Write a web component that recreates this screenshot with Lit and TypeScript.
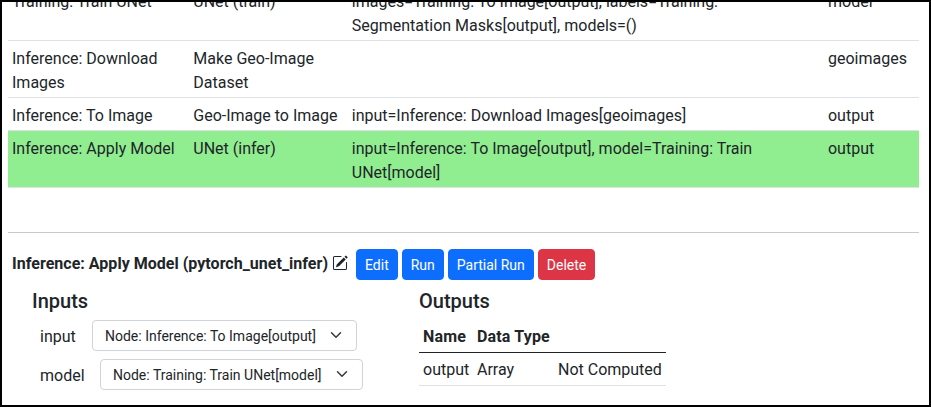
import { LitElement, html, css, svg } from "lit";
import { customElement } from "lit/decorators.js";

interface PipelineNode {
  name: string;
  type: string;
  inputs: string;
  output: string;
  selected?: boolean;
}

const NODES: PipelineNode[] = [
  {
    name: "Training: Train UNet",
    type: "UNet (train)",
    inputs: "images=Training: To Image[output], labels=Training: Segmentation Masks[output], models=()",
    output: "model",
  },
  { name: "Inference: Download Images", type: "Make Geo-Image Dataset", inputs: "", output: "geoimages" },
  {
    name: "Inference: To Image",
    type: "Geo-Image to Image",
    inputs: "input=Inference: Download Images[geoimages]",
    output: "output",
  },
  {
    name: "Inference: Apply Model",
    type: "UNet (infer)",
    inputs: "input=Inference: To Image[output], model=Training: Train UNet[model]",
    output: "output",
    selected: true,
  },
];

const pencilSquare = svg`
  <path d="M15.502 1.94a.5.5 0 0 1 0 .706L14.459 3.69l-2-2L13.502.646a.5.5 0 0 1 .707 0l1.293 1.293zm-1.75 2.456-2-2L4.939 9.21a.5.5 0 0 0-.121.196l-.805 2.414a.25.25 0 0 0 .316.316l2.414-.805a.5.5 0 0 0 .196-.12l6.813-6.814z"/>
  <path fill-rule="evenodd" d="M1 13.5A1.5 1.5 0 0 0 2.5 15h11a1.5 1.5 0 0 0 1.5-1.5v-6a.5.5 0 0 0-1 0v6a.5.5 0 0 1-.5.5h-11a.5.5 0 0 1-.5-.5v-11a.5.5 0 0 1 .5-.5H9a.5.5 0 0 0 0-1H2.5A1.5 1.5 0 0 0 1 2.5v11z"/>`;

@customElement("app-root")
export class AppRoot extends LitElement {
  static styles = css`
    :host {
      display: block;
      box-sizing: border-box;
      height: 407px;
      overflow: hidden;
      border: 2px solid #000;
      background: #fff;
      color: #212529;
      font: 400 16px/24px Roboto, "Liberation Sans", sans-serif;
    }
    * { box-sizing: border-box; }
    .page { padding: 0 10px 0 6px; }
    .nodes { margin-top: -18px; }
    .node {
      display: grid;
      grid-template-columns: 181.3px 158.5px 476.2px 1fr;
      border-bottom: 1px solid #dee2e6;
    }
    .node.selected { background: #90ee90; }
    .cell { padding: 6px 4px 2px; }
    .cell.inputs { padding-right: 50px; }
    .rule { height: 1px; margin: 44px 0 16px; background: #c8c9ca; }
    .bar { display: flex; align-items: center; gap: 4px; height: 31px; padding-left: 4px; }
    .title { width: 316px; padding-bottom: 2px; font-weight: 700; letter-spacing: 0.02px; white-space: nowrap; }
    .edit-icon { width: 16px; height: 16px; margin: 0 4px 3px 0; fill: #212529; flex: none; }
    button {
      height: 31px;
      padding: 5px 8px 3px;
      border: 1px solid #0d6efd;
      border-radius: 4px;
      background: #0d6efd;
      color: #fff;
      font: 400 14px/21px Roboto, "Liberation Sans", sans-serif;
      white-space: nowrap;
    }
    button.danger { background: #dc3545; border-color: #dc3545; }
    .panels { display: grid; grid-template-columns: 387px 1fr; padding: 9px 0 0 24px; }
    h5 { margin: 0 0 7px; font-size: 20px; line-height: 24px; font-weight: 500; }
    .field { display: flex; align-items: center; height: 31px; margin: 0 0 8px 8px; }
    .label { padding-top: 2px; }
    .label.input { width: 52px; }
    .label.model { width: 60px; }
    .select {
      display: flex;
      align-items: center;
      justify-content: space-between;
      height: 31px;
      padding: 1px 12px 0;
      border: 1px solid #ced4da;
      border-radius: 4px;
      font-size: 14px;
      line-height: 21px;
      white-space: nowrap;
    }
    .select.input { width: 265px; }
    .select.model { width: 263px; }
    .chevron { width: 16px; height: 12px; margin-bottom: 2px; }
    table { border-collapse: separate; border-spacing: 0; width: 247px; table-layout: fixed; }
    th, td { padding: 5px 4px 3px; height: 33px; text-align: left; white-space: nowrap; border-bottom: 1px solid #dee2e6; }
    th { font-weight: 700; letter-spacing: 0.15px; border-bottom-color: #212529; }
    .col-name { width: 54px; }
    .col-type { width: 81px; }
  `;

  private select(kind: string, label: string) {
    return html`<div class="field">
      <span class="label ${kind}">${kind}</span>
      <div class="select ${kind}">
        <span>${label}</span>
        <svg class="chevron" viewBox="0 0 16 16">
          <path fill="none" stroke="#343a40" stroke-linecap="round" stroke-linejoin="round" stroke-width="2" d="M2 5l6 6 6-6" />
        </svg>
      </div>
    </div>`;
  }

  render() {
    return html`<div class="page">
      <div class="nodes">
        ${NODES.map(
          (n) => html`<div class="node ${n.selected ? "selected" : ""}">
            <div class="cell">${n.name}</div>
            <div class="cell">${n.type}</div>
            <div class="cell inputs">${n.inputs}</div>
            <div class="cell">${n.output}</div>
          </div>`,
        )}
      </div>
      <div class="rule"></div>
      <div class="bar">
        <span class="title">Inference: Apply Model (pytorch_unet_infer)</span>
        <svg class="edit-icon" viewBox="0 0 16 16">${pencilSquare}</svg>
        <button>Edit</button>
        <button>Run</button>
        <button>Partial Run</button>
        <button class="danger">Delete</button>
      </div>
      <div class="panels">
        <section>
          <h5>Inputs</h5>
          ${this.select("input", "Node: Inference: To Image[output]")}
          ${this.select("model", "Node: Training: Train UNet[model]")}
        </section>
        <section>
          <h5>Outputs</h5>
          <table>
            <thead>
              <tr><th class="col-name">Name</th><th class="col-type">Data Type</th><th></th></tr>
            </thead>
            <tbody>
              <tr><td>output</td><td>Array</td><td>Not Computed</td></tr>
            </tbody>
          </table>
        </section>
      </div>
    </div>`;
  }
}
